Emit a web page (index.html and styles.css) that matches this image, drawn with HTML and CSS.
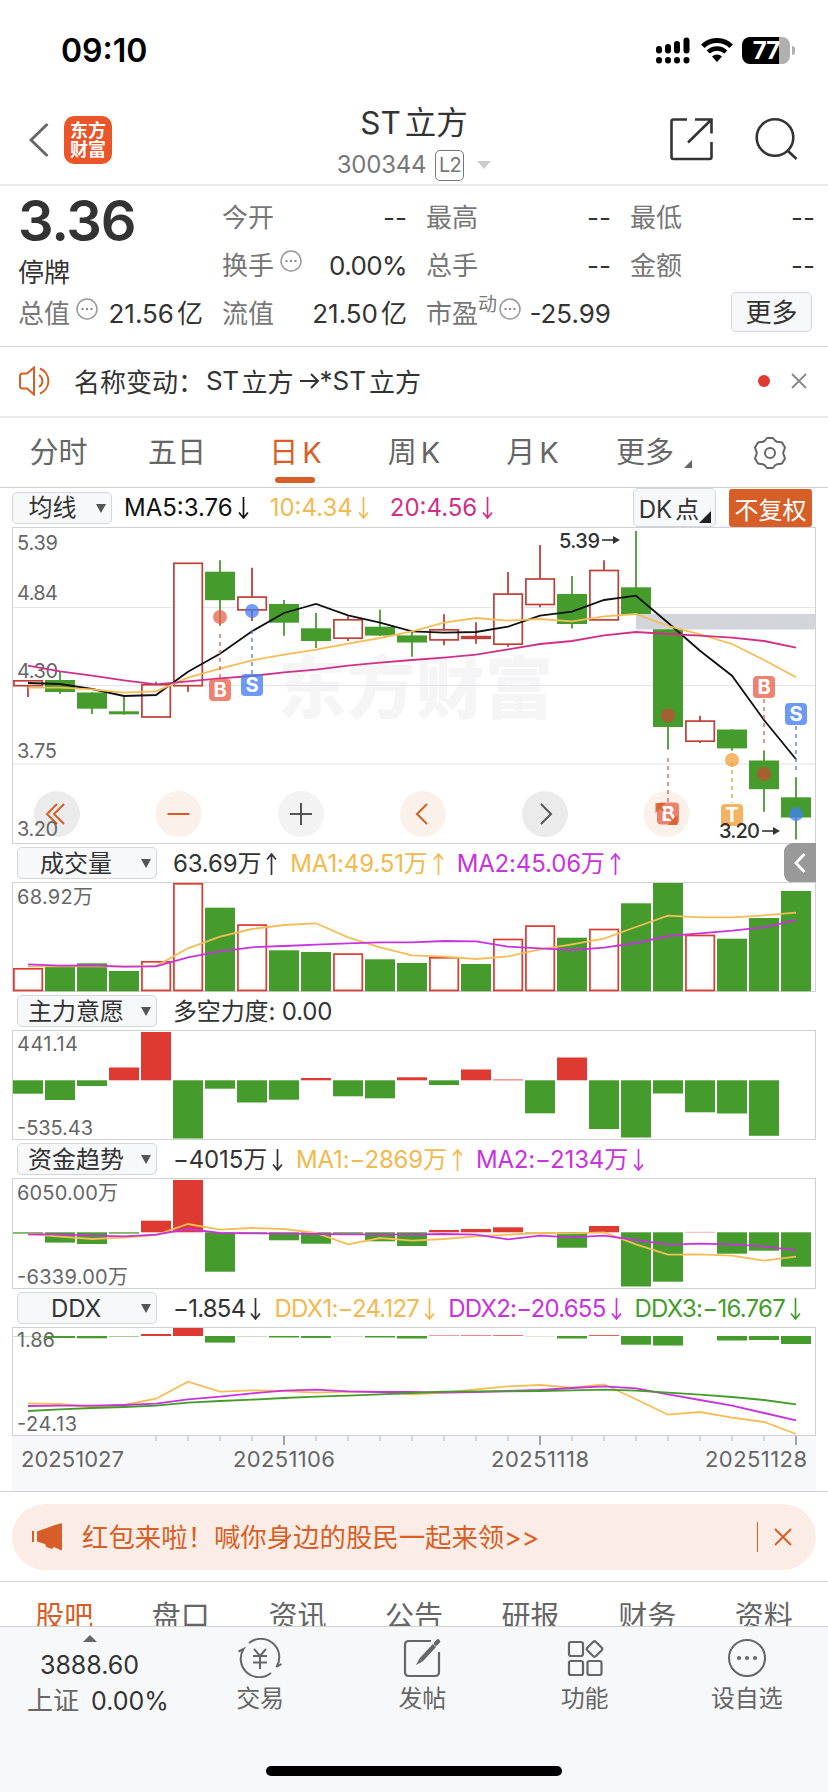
FILE: index.html
```html
<!DOCTYPE html>
<html lang="zh-CN">

<head>
    <meta charset="UTF-8">
    <meta name="viewport" content="width=device-width, initial-scale=1.0">
    <title>ST立方 300344</title>
    <link rel="stylesheet" href="styles.css">
</head>

<body>
    <!-- shared icons -->
    <svg class="defs" width="0" height="0">
        <symbol id="down" viewBox="0 0 11 22">
            <path d="M5.5 0V21M1 15.5L5.5 21L10 15.5" fill="none" stroke="currentColor" stroke-width="1.7" />
        </symbol>
        <symbol id="up" viewBox="0 0 11 22">
            <path d="M5.5 22V1M1 6.5L5.5 1L10 6.5" fill="none" stroke="currentColor" stroke-width="1.7" />
        </symbol>
        <symbol id="tip" viewBox="0 0 22 22">
            <circle cx="11" cy="11" r="10" fill="none" stroke="#999" stroke-width="1.5" />
            <path d="M5.5 11h2M10 11h2M14.5 11h2" stroke="#888" stroke-width="2" />
        </symbol>
    </svg>

    <div class="status-bar">
        <span class="time">09:10</span>
        <div class="status-icons">
            <svg width="34" height="27" viewBox="0 0 34 27">
                <g stroke="#000" stroke-width="6" stroke-linecap="round">
                    <path d="M3 12V13.5M12 10V13.5M21 7V13.5M30.500 3.500V13.500" />
                    <path d="M3 23V23.500M12 23V23.500M21 23V23.500M30.500 23V23.500" />
                </g>
            </svg>
            <svg class="wifi" width="32" height="24" viewBox="0 0 32 24">
                <path d="M1.800 8.200A20.500 20.500 0 0 1 30.200 8.200" fill="none" stroke="#000" stroke-width="5" />
                <path d="M7.200 14A12.600 12.600 0 0 1 24.800 14" fill="none" stroke="#000" stroke-width="4.500" />
                <path d="M16 24L11 18.500A7.500 7.500 0 0 1 21 18.500Z" />
            </svg>
            <div class="battery"><span>77</span></div>
            <i class="battery-cap"></i>
        </div>
    </div>

    <header class="header">
        <div class="header-left">
            <svg width="20" height="34" viewBox="0 0 20 34">
                <path d="M18.500 1L2 17L18.500 33" fill="none" stroke="#666" stroke-width="2.800" />
            </svg>
            <div class="logo"><span>东方</span><span>财富</span></div>
        </div>
        <div class="header-title">
            <h1>ST<span>立方</span></h1>
            <p><span class="code">300344</span><b>L2</b><i></i></p>
        </div>
        <div class="header-right">
            <svg width="44" height="44" viewBox="0 0 44 44">
                <g fill="none" stroke="#333" stroke-width="2.600">
                    <path d="M18 2.500H4.500Q2.500 2.500 2.500 4.500V40Q2.500 42 4.500 42H40.500Q42.500 42 42.500 40V25" />
                    <path d="M26 2.500H42.500V16.500M42 3L19 25.500" />
                </g>
            </svg>
            <svg width="44" height="44" viewBox="0 0 44 44">
                <circle cx="20" cy="20.500" r="18.300" fill="none" stroke="#333" stroke-width="2.600" />
                <path d="M32.500 33.500L41.500 42" stroke="#333" stroke-width="2.600" />
            </svg>
        </div>
    </header>

    <section class="quote">
        <div class="price">
            <strong>3.36</strong>
            <span>停牌</span>
        </div>
        <div class="cell"><label>今开</label><span>--</span></div>
        <div class="cell"><label>最高</label><span>--</span></div>
        <div class="cell"><label>最低</label><span>--</span></div>
        <div class="cell"><label>换手<svg class="tip"><use href="#tip" /></svg></label><span class="rate">0.00%</span></div>
        <div class="cell"><label>总手</label><span>--</span></div>
        <div class="cell"><label>金额</label><span>--</span></div>
        <div class="cell"><label>总值<svg class="tip"><use href="#tip" /></svg></label><span>21.56<em>亿</em></span></div>
        <div class="cell"><label>流值</label><span>21.50<em>亿</em></span></div>
        <div class="cell"><label>市盈<sup>动</sup><svg class="tip tight"><use href="#tip" /></svg></label><span>-25.99</span></div>
        <div class="cell"><button class="more-btn">更多</button></div>
    </section>

    <section class="notice">
        <svg width="34" height="30" viewBox="0 0 34 30">
            <g fill="none" stroke="#d75f27" stroke-width="2">
                <path d="M15 1.500V28.500L8 22.500H3.500Q1 22.500 1 20V10Q1 7.500 3.500 7.500H8Z" />
                <path d="M20 9A7 7 0 0 1 20 21M21 2.500A13.500 13.500 0 0 1 21 27.500" />
            </g>
        </svg>
        <p>名称变动：<span>ST</span><em>立方</em><svg class="to" width="20" height="20" viewBox="0 0 20 20"><path d="M0 10H18M11 3L18 10L11 17" fill="none" stroke="#333" stroke-width="2" /></svg>*ST<em>立方</em></p>
        <i class="dot"></i>
        <svg width="16" height="16" viewBox="0 0 16 16">
            <path d="M1 1L15 15M15 1L1 15" stroke="#888" stroke-width="1.800" />
        </svg>
    </section>

    <nav class="periods">
        <a>分时</a>
        <a>五日</a>
        <a class="active">日<span>K</span></a>
        <a>周<span>K</span></a>
        <a>月<span>K</span></a>
        <a class="has-more">更多</a>
        <a class="gear">
            <svg width="34" height="34" viewBox="-17 -17 34 34">
                <g fill="none" stroke="#666" stroke-width="2">
                    <path d="M-5-12.500L-3-15H3L5-12.500Q7-10.500 9.500-11L12-10.500L15-5.500L14-2.500Q12.500 0 14 2.500L15 5.500L12 10.500L9.500 11Q7 10.500 5 12.500L3 15H-3L-5 12.500Q-7 10.500-9.500 11L-12 10.500L-15 5.500L-14 2.500Q-12.500 0-14-2.500L-15-5.500L-12-10.500L-9.500-11Q-7-10.500-5-12.500Z" stroke-linejoin="round" />
                    <circle r="5" />
                </g>
            </svg>
        </a>
    </nav>

    <div class="legend main-legend">
        <button class="pick small">均线</button>
        <span class="black">MA5:3.76<svg><use href="#down" /></svg></span>
        <span class="yellow">10:4.34<svg><use href="#down" /></svg></span>
        <span class="pink">20:4.56<svg><use href="#down" /></svg></span>
        <button class="dk">DK<em>点</em></button>
        <button class="fq">不复权</button>
    </div>
    <svg class="chart" id="kline" width="804" height="317" viewBox="12 527 804 317"></svg>

    <div class="legend">
        <button class="pick">成交量</button>
        <span class="dark">63.69万<svg><use href="#up" /></svg></span>
        <span class="yellow">MA1:49.51万<svg><use href="#up" /></svg></span>
        <span class="purple">MA2:45.06万<svg><use href="#up" /></svg></span>
        <div class="side-tab">
            <svg width="12" height="20" viewBox="0 0 12 20">
                <path d="M10.500 1L2 10L10.500 19" fill="none" stroke="#fff" stroke-width="2.800" />
            </svg>
        </div>
    </div>
    <svg class="chart" id="volume" width="804" height="110" viewBox="12 882 804 110"></svg>

    <div class="legend">
        <button class="pick">主力意愿</button>
        <span class="dark">多空力度: 0.00</span>
    </div>
    <svg class="chart" id="will" width="804" height="110" viewBox="12 1030 804 110"></svg>

    <div class="legend">
        <button class="pick">资金趋势</button>
        <span class="dark">−4015万<svg><use href="#down" /></svg></span>
        <span class="yellow">MA1:−2869万<svg><use href="#up" /></svg></span>
        <span class="purple">MA2:−2134万<svg><use href="#down" /></svg></span>
    </div>
    <svg class="chart" id="fund" width="804" height="111" viewBox="12 1178 804 111"></svg>

    <div class="legend ddx-legend">
        <button class="pick">DDX</button>
        <span class="dark">−1.854<svg><use href="#down" /></svg></span>
        <span class="yellow">DDX1:−24.127<svg><use href="#down" /></svg></span>
        <span class="purple">DDX2:−20.655<svg><use href="#down" /></svg></span>
        <span class="green">DDX3:−16.767<svg><use href="#down" /></svg></span>
    </div>
    <svg class="chart" id="ddx" width="804" height="109" viewBox="12 1327 804 109"></svg>
    <svg class="chart axis" id="axis" width="804" height="55" viewBox="12 1436 804 55"></svg>

    <section class="banner-wrap">
        <div class="banner">
            <svg width="31" height="28" viewBox="0 0 31 28">
                <path d="M1 8V19" stroke="#d75f27" stroke-width="2" />
                <path d="M5 8.500L23 2L28 0.500H30V27H28.500L24 25L22 24L20 26L14.500 24L13 21L5 18.500Z" fill="#d75f27" />
            </svg>
            <p>红包来啦！喊你身边的股民一起来领&gt;&gt;</p>
            <i></i>
            <svg width="18" height="18" viewBox="0 0 18 18">
                <path d="M1 1L17 17M17 1L1 17" stroke="#d75f27" stroke-width="2" />
            </svg>
        </div>
    </section>

    <nav class="sections">
        <a class="active">股吧</a>
        <a>盘口</a>
        <a>资讯</a>
        <a>公告</a>
        <a>研报</a>
        <a>财务</a>
        <a>资料</a>
    </nav>

    <footer class="bottom">
        <div class="toolbar">
            <div class="index">
                <i></i>
                <span>3888.60</span>
                <span class="change"><label>上证</label>0.00%</span>
            </div>
            <a>
                <svg width="44" height="40" viewBox="-22 -20 44 40">
                    <g fill="none" stroke="#666" stroke-width="2">
                        <path d="M-11-15A18.500 18.500 0 0 1 16.500 9L21.500 6" />
                        <path d="M11 15A18.500 18.500 0 0 1-16.500-9L-21.500-6.500" />
                        <path d="M-6-9L0-2L6-9M0-2V11M-7-2H7M-7 4.500H7" />
                    </g>
                </svg>
                <span>交易</span>
            </a>
            <a>
                <svg width="44" height="40" viewBox="-22 -20 44 40">
                    <g fill="none" stroke="#666" stroke-width="2.200">
                        <path d="M9-17H-13Q-17-17-17-13V14Q-17 18-13 18H13Q17 18 17 14V-6" />
                        <path d="M12.500-12.500L-1 2" stroke-width="4.500" />
                        <path d="M-2.500 0.500L0.500 3.500L-6 7Z" fill="#666" stroke="none" />
                        <path d="M14-14.500L16-16.500" stroke-width="4.500" stroke-linecap="round" />
                    </g>
                </svg>
                <span>发帖</span>
            </a>
            <a>
                <svg width="44" height="40" viewBox="-22 -20 44 40">
                    <g fill="none" stroke="#666" stroke-width="2.200">
                        <rect x="-16" y="-16" width="14" height="14" rx="2" />
                        <rect x="-16" y="3" width="14" height="14" rx="2" />
                        <rect x="2.500" y="3" width="14" height="14" rx="2" />
                        <rect x="3.500" y="-15" width="12" height="12" rx="2" transform="rotate(45 9.500 -9)" />
                    </g>
                </svg>
                <span>功能</span>
            </a>
            <a>
                <svg width="44" height="40" viewBox="-22 -20 44 40">
                    <circle r="18" fill="none" stroke="#666" stroke-width="2" />
                    <g fill="#666">
                        <circle cx="-8" r="2" />
                        <circle r="2" />
                        <circle cx="8" r="2" />
                    </g>
                </svg>
                <span>设自选</span>
            </a>
        </div>
        <div class="home-bar"></div>
    </footer>

    <script src="script.js"></script>
</body>

</html>
```
FILE: styles.css
```css
* {
    box-sizing: border-box;
}

body {
    margin: 0;
    width: 828px;
    height: 1792px;
    overflow: hidden;
    background: #fff;
    color: #333;
    font-family: Inter, "Noto Sans CJK SC", sans-serif;
    font-size: 26px;
}

h1, p {
    margin: 0;
    font-weight: 400;
}

em, i, b {
    font-style: normal;
    font-weight: 400;
}

button {
    font-family: inherit;
    padding: 0;
    border: 1px solid #d5d6da;
    border-radius: 5px;
    background: #f7f8fa;
    color: #333;
}

svg {
    flex: none;
    display: block;
}

.defs {
    position: absolute;
}

/* status bar */
.status-bar {
    display: flex;
    justify-content: space-between;
    align-items: center;
    height: 100px;
    padding: 0 33px 0 61px;
}

.time {
    color: #000;
    font-size: 32px;
    font-weight: 600;
}

.status-icons {
    display: flex;
    align-items: center;
}

.wifi {
    margin: 0 9px 0 11px;
}

.battery {
    width: 48px;
    height: 27px;
    border-radius: 8px;
    background: linear-gradient(to right, #000 37px, #b0b0b0 37px);
    color: #fff;
    font-size: 24px;
    font-weight: 700;
    line-height: 27px;
    text-align: center;
    letter-spacing: -1px;
}

.battery-cap {
    width: 3px;
    height: 9px;
    margin-left: 2px;
    border-radius: 0 3px 3px 0;
    background: #b0b0b0;
}

/* header */
.header {
    display: grid;
    grid-template-columns: 1fr auto 1fr;
    height: 86px;
    border-bottom: 2px solid #ebebeb;
}

.header-left {
    display: flex;
    align-items: center;
    gap: 15px;
    padding: 0 0 4px 29px;
}

.logo {
    display: flex;
    flex-direction: column;
    justify-content: center;
    align-items: center;
    width: 48px;
    height: 48px;
    border-radius: 10px;
    background: #ea5529;
    color: #fff;
    font-size: 18px;
    font-weight: 700;
    line-height: 19px;
}

.header-title {
    text-align: center;
}

.header-title h1 {
    margin-top: 4px;
    font-size: 31.500px;
    line-height: 38px;
}

.header-title h1 span {
    margin-left: 4px;
}

.header-title p {
    display: flex;
    align-items: center;
    margin-top: 7px;
    color: #777;
    font-size: 24px;
    line-height: 32px;
    letter-spacing: -0.200px;
}

.header-title b {
    width: 29px;
    height: 31px;
    margin-left: 9px;
    border: 1.5px solid #777;
    border-radius: 5px;
    font-size: 20px;
    line-height: 28px;
    letter-spacing: -1px;
}

.header-title i {
    margin-left: 13px;
    border: 7px solid transparent;
    border-top: 8px solid #ccc;
    border-bottom: 0;
}

.header-right {
    display: flex;
    justify-content: flex-end;
    gap: 42px;
    padding: 17px 29px 0 0;
}

/* quote */
.quote {
    display: grid;
    grid-template-columns: repeat(4, 184px);
    grid-template-rows: repeat(3, 48px);
    column-gap: 20px;
    height: 161px;
    padding: 8px 13px 0 19px;
    border-bottom: 1px solid #d0d0d0;
}

.price {
    grid-row: span 2;
    display: flex;
    flex-direction: column;
}

.price strong {
    margin-left: -1px;
    font-size: 56px;
    font-weight: 600;
    line-height: 54px;
    letter-spacing: -1.300px;
}

.price span {
    margin: 7px 0 0 -1px;
    line-height: 36px;
}

.cell {
    display: flex;
    justify-content: space-between;
    align-items: center;
    line-height: 36px;
    white-space: nowrap;
}

.cell label {
    display: flex;
    align-items: center;
    margin-left: -1px;
    color: #777;
}

.cell em {
    margin-left: 3px;
}

.cell sup {
    align-self: flex-start;
    margin-top: -8px;
    font-size: 19px;
    line-height: 34px;
}

.rate {
    letter-spacing: -0.600px;
}

.tip {
    width: 22px;
    height: 22px;
    margin: -10px 0 0 6px;
}

.tip.tight {
    margin-left: 2px;
}

.more-btn {
    width: 81px;
    height: 40px;
    margin: -5px 3px 0 auto;
    padding-top: 2px;
    font-size: 26px;
    line-height: 34px;
}

/* notice */
.notice {
    display: flex;
    align-items: center;
    height: 71px;
    padding: 0 21px 2px 19px;
    border-bottom: 2px solid #ebebeb;
}

.notice p {
    display: flex;
    align-items: center;
    margin: 0 auto 0 21px;
}

.notice p span {
    margin-left: 2px;
    letter-spacing: -0.500px;
}

.notice em {
    margin-left: 3px;
}

.to {
    margin: 0 0 0 6px;
}

.dot {
    width: 12px;
    height: 12px;
    margin-right: 21px;
    border-radius: 50%;
    background: #de3a32;
}

/* period tabs */
.periods {
    display: grid;
    grid-template-columns: repeat(7, 118.500px);
    justify-content: center;
    height: 70px;
    border-bottom: 1px solid #d0d0d0;
    color: #666;
    font-size: 29px;
    line-height: 70px;
    text-align: center;
}

.periods a {
    position: relative;
}

.periods span {
    margin-left: 4px;
}

.periods .active {
    color: #d75f27;
}

.periods .active::after {
    content: "";
    position: absolute;
    left: 39px;
    bottom: 5px;
    width: 40px;
    height: 6px;
    border-radius: 3px;
    background: #d75f27;
}

.periods .has-more {
    padding-right: 12px;
}

.has-more::after {
    content: "";
    position: absolute;
    right: 18px;
    bottom: 20px;
    border: 4px solid #666;
    border-top-color: transparent;
    border-left-color: transparent;
}

.gear {
    display: flex;
    justify-content: center;
    align-items: center;
}

/* legends above every chart */
.legend {
    display: flex;
    align-items: center;
    height: 38px;
    padding-left: 17px;
    font-size: 24px;
    letter-spacing: -0.150px;
    white-space: nowrap;
}

.legend > span {
    display: flex;
    align-items: center;
    margin-left: 13px;
    padding-top: 2px;
    line-height: 34px;
}

.legend > span svg {
    width: 11px;
    height: 22px;
    margin-left: 5px;
}

.main-legend {
    height: 39px;
    padding-left: 12px;
    letter-spacing: 0;
}

.main-legend > span {
    margin: 0 7px 0 14px;
    padding-top: 0;
}

.ddx-legend {
    letter-spacing: -0.750px;
}

.pick {
    display: flex;
    flex: none;
    justify-content: center;
    align-items: center;
    position: relative;
    width: 140px;
    height: 32px;
    padding: 2px 22px 0 0;
    font-size: 24px;
    line-height: 28px;
}

.pick.small {
    width: 100px;
    padding: 0 19px 0 0;
}

.pick::after {
    content: "";
    position: absolute;
    right: 5px;
    top: 11px;
    border: 5px solid transparent;
    border-top: 9px solid #555;
    border-bottom: 0;
}

.legend > .pick + span {
    margin-left: 16px;
}

.legend > .small + span {
    margin-left: 12px;
}

.black { color: #111; }
.dark { color: #333; }
.yellow { color: #f2b94f; }
.pink { color: #cf2f86; }
.purple { color: #c734dc; }
.green { color: #459c2c; }

.dk {
    position: relative;
    width: 83px;
    height: 39px;
    margin-left: auto;
    padding-right: 11px;
    font-size: 24px;
}

.dk em {
    margin-left: 3px;
}

.dk::after {
    content: "";
    position: absolute;
    right: 4px;
    bottom: 3px;
    border: 6px solid #222;
    border-top-color: transparent;
    border-left-color: transparent;
}

.fq {
    width: 83px;
    height: 38px;
    margin: 1px 16px 0 13px;
    border: 0;
    border-radius: 3px;
    background: #d75f27;
    color: #fff;
    font-size: 24px;
}

.side-tab {
    display: flex;
    justify-content: center;
    align-items: center;
    width: 32px;
    height: 40px;
    margin: 0 12px 0 auto;
    border-radius: 9px 0 0 9px;
    background: #999;
}

/* charts */
.chart {
    margin-left: 12px;
}

.chart text {
    fill: #666;
    font-size: 20px;
}

.chart .mark {
    fill: #333;
    font-weight: 500;
}

.chart .badge {
    fill: #fff;
    font-size: 20px;
    font-weight: 700;
    text-anchor: middle;
}

.chart .watermark {
    fill: #f5f5f5;
    font-size: 68px;
    font-weight: 900;
}

.axis {
    background: #f7f8fa;
}

.chart.axis text {
    font-size: 22px;
}

/* banner */
.banner-wrap {
    height: 91px;
    padding: 12px 12px 0;
    border-top: 1px solid #d0d0d0;
    border-bottom: 1px solid #d0d0d0;
}

.banner {
    display: flex;
    align-items: center;
    height: 66px;
    padding: 0 24px 0 20px;
    border-radius: 33px;
    background: #fbede6;
    color: #d75f27;
    font-size: 26.400px;
}

.banner p {
    margin: 0 auto 0 19px;
    padding-bottom: 4px;
}

.banner i {
    width: 1.500px;
    height: 30px;
    margin-right: 16px;
    background: #d75f27;
}

/* section tabs, cut off by the bottom bar */
.sections {
    display: grid;
    grid-template-columns: repeat(7, 116.600px);
    justify-content: center;
    height: 44px;
    overflow: hidden;
    color: #666;
    font-size: 29px;
    line-height: 70px;
    text-align: center;
}

.sections .active {
    color: #d75f27;
}

/* bottom bar */
.bottom {
    height: 166px;
    border-top: 1px solid #d0d0d0;
    background: #f7f8fa;
}

.toolbar {
    display: grid;
    grid-template-columns: 179px repeat(4, 162.250px);
    height: 139px;
}

.toolbar a {
    display: flex;
    flex-direction: column;
    align-items: center;
    padding-top: 11px;
    color: #666;
    font-size: 24px;
}

.toolbar a span {
    margin-top: 4px;
    line-height: 34px;
}

.index {
    display: flex;
    flex-direction: column;
    align-items: center;
    font-size: 25px;
    line-height: 35px;
}

.index i {
    margin: 8px 0 6px;
    border: 7px solid transparent;
    border-bottom: 7px solid #666;
    border-top: 0;
}

.index label {
    margin-right: 12px;
    color: #666;
    font-size: 26px;
}

.index .change {
    padding-left: 17px;
}

.home-bar {
    width: 296px;
    height: 10px;
    margin: 0 auto;
    border-radius: 5px;
    background: #000;
}
```
FILE: script.js
```js
const RED = '#de3a32';
const DARK_RED = '#bf3f38';
const GREEN = '#459c2c';
const YELLOW = '#f5bd55';
const PURPLE = '#c734dc';
const PINK = '#d0308a';

// 25 trading days, 32px each
const cx = i => 28 + i * 32;

const rect = (x, y, w, h, attrs) => `<rect x="${x}" y="${y}" width="${w}" height="${h}" ${attrs}/>`;
const line = (x1, y1, x2, y2, color, w = 1, extra = '') =>
    `<line x1="${x1}" y1="${y1}" x2="${x2}" y2="${y2}" stroke="${color}" stroke-width="${w}" ${extra}/>`;
const text = (x, y, str, len, cls = '') =>
    `<text x="${x}" y="${y}" ${len ? `textLength="${len}"` : ''} class="${cls}">${str}</text>`;
const curve = (ys, color, w = 1.8) =>
    `<polyline fill="none" stroke="${color}" stroke-width="${w}" points="${ys.map((y, i) => cx(i) + ',' + y).join(' ')}"/>`;
const frame = (y, h) => rect(12.5, y + 0.5, 803, h - 1, 'fill="none" stroke="#d0d1d5"');

function draw(id, parts) {
    document.getElementById(id).innerHTML = parts.join('');
}

function body(i, top, bottom, up, color) {
    if (up && bottom - top > 4) {
        return rect(cx(i) - 14.1, top + 0.8, 28.4, bottom - top - 1.6, `fill="#fff" stroke="${color}" stroke-width="1.7"`);
    }
    return rect(cx(i) - 15, top, 30, bottom - top, `fill="${up ? color : GREEN}"`);
}

// candles: [up, body top, body bottom, wick top, wick bottom]
const candles = [
    [1, 680, 686.5, 680, 697], [0, 680, 692, 671, 694], [0, 692.5, 708.7, 692, 714], [0, 711.3, 714.3, 696, 714.5],
    [1, 684, 717.8, 681.7, 717], [1, 562.5, 686.5, 563, 691.7], [0, 571.7, 600.2, 560.3, 625.7], [1, 596.3, 610.7, 567.7, 621],
    [0, 604, 622.7, 600, 635.7], [0, 628.3, 641, 613, 648], [1, 619, 639, 616.3, 641], [0, 626.7, 635.6, 609.7, 636],
    [0, 635.4, 642.5, 631.7, 656.7], [1, 629, 640.7, 614.3, 645.3], [1, 635.8, 639.2, 622.3, 643.8], [1, 593.3, 645, 572, 646.7],
    [1, 578.2, 605.3, 545, 607.2], [0, 594, 624, 576, 628.5], [1, 569.7, 620.7, 560.3, 620], [0, 587.3, 614, 531, 614],
    [0, 629.3, 727, 629.3, 749.5], [1, 720.3, 742, 715.7, 743], [0, 729.5, 748.4, 729.5, 750.7], [0, 760.5, 789.2, 750.5, 811.7],
    [0, 797.3, 817.5, 777.3, 839.5]
];
const ma5 = [683, 684, 689, 696, 695, 671.7, 653.7, 631.3, 613, 604, 615.3, 622.7, 631.3, 632.7, 632, 626.7, 615.7, 611.7, 600, 595.7, 622.7, 650.7, 675.7, 720, 759.3];
const ma10 = [687.7, 687.7, 689.3, 692.7, 691.3, 677.7, 668.7, 660.3, 654.7, 649.7, 643.7, 638, 631.3, 622.7, 618, 620.7, 619, 621.3, 616.3, 614, 626, 634.3, 644, 660, 677.3];
const ma20 = [665.7, 671.3, 675.7, 680.3, 684.3, 681.3, 678.3, 676, 672.3, 669.7, 665.7, 662.7, 660, 657.7, 654.7, 649.3, 644, 641, 635.3, 632, 634, 635.7, 637.7, 641, 647.7];

// trade marks: [day, letter, dot y, badge y, dash from, dash to, color, dot color]
const marks = [
    [6, 'B', 617, 690, 634, 678, '#e9604c', '#e9604c'], [7, 'S', 611, 685, 630, 674, '#427ff5', '#427ff5'],
    [20, 'B', 715.5, 813.5, 758, 802, '#e9604c', '#c54c30'], [22, 'T', 760, 815, 762, 803, '#f09d35', '#f09d35'],
    [23, 'B', 774, 687, 699, 746, '#e9604c', '#c54c30'], [24, 'S', 814, 714, 726, 770, '#427ff5', '#427ff5']
];
function mark([i, letter, dotY, badgeY, from, to, color, dotColor]) {
    const x = cx(i);
    return line(x, from, x, to, color, 1.7, 'stroke-dasharray="4 4" opacity="0.8"') +
        `<circle cx="${x}" cy="${dotY}" r="7" fill="${dotColor}" opacity="0.75"/>` +
        rect(x - 11, badgeY - 11, 22, 22, `rx="4" fill="${color}" opacity="0.78"`) +
        text(x, badgeY + 7.3, letter, 0, 'badge');
}

// round buttons over the chart
function roundBtn(x, fill, icon) {
    return `<g transform="translate(${x} 814)"><circle r="23" fill="${fill}"/>${icon}</g>`;
}
const stroke = (d, color) => `<path d="${d}" fill="none" stroke="${color}" stroke-width="2"/>`;
const arrow = (x, y) => line(x, y, x + 13, y, '#333', 1.6) + `<path d="M${x + 11} ${y - 4}L${x + 18} ${y}L${x + 11} ${y + 4}Z" fill="#333"/>`;

draw('kline', [
    text(278, 713, '东方财富', 275, 'watermark'),
    line(12, 607.5, 815, 607.5, '#e4e5ea'), line(12, 685.5, 815, 685.5, '#e4e5ea'), line(12, 764, 815, 764, '#eff0f6', 2),
    frame(527, 317),
    roundBtn(57, '#ebebeb', stroke('M0-10L-10 0L0 10M7-10L-3 0L7 10', '#d75f27')),
    roundBtn(178.5, '#fbf1eb', stroke('M-11 0H11', '#d75f27')),
    roundBtn(301, '#f3f3f3', stroke('M-11 0H11M0-11V11', '#555')),
    roundBtn(423, '#fbf1eb', stroke('M4-10L-6 0L4 10', '#d75f27')),
    roundBtn(545, '#ebebeb', stroke('M-4-10L6 0L-4 10', '#555')),
    roundBtn(666.5, '#fbf1eb', ''),
    rect(636, 614, 179.5, 15.5, 'fill="#d4d5da"'),
    ...candles.map(([up, t, b, wt, wb], i) =>
        line(cx(i), wt, cx(i), wb, up ? DARK_RED : GREEN, 1.8) + body(i, t, b, up, DARK_RED)),
    text(17, 550, '5.39', 41), text(17, 599.5, '4.84', 41), text(17, 678, '4.30', 41),
    text(17, 757.5, '3.75', 40), text(17, 836, '3.20', 41),
    curve(ma5, '#111'), curve(ma10, YELLOW), curve(ma20, PINK),
    ...marks.map(mark),
    // fullscreen corners
    '<g transform="translate(666.500 814)" opacity="0.85"><path d="M-11-11H-1L-11-1ZM11 11H1L11 1Z" fill="#d75f27"/>' +
    stroke('M-8-8L-3-3M3 3L8 8', '#d75f27') + '</g>',
    text(559, 548, '5.39', 41, 'mark'), arrow(602, 540),
    text(719, 838, '3.20', 41, 'mark'), arrow(762, 831)
]);

// volume: top of every bar
const volTop = [968, 967, 963.3, 971, 961, 883, 907.7, 924.3, 950.3, 952, 953.3, 959.3, 963, 957, 964, 938.7, 925.3, 937.7, 928.7, 903.3, 883, 934.7, 938.7, 918, 891];
const volUp = [1, 0, 0, 0, 1, 1, 0, 1, 0, 0, 1, 0, 0, 1, 0, 1, 1, 0, 1, 0, 0, 1, 0, 0, 0];
draw('volume', [
    frame(882, 110),
    ...volTop.map((y, i) => body(i, y, 991.2, volUp[i], RED)),
    curve([966.3, 966.3, 966.3, 966.7, 966, 948.3, 936.7, 929, 925, 923.3, 937.3, 947.3, 955.3, 956.7, 959, 956.3, 949.3, 944.3, 938.7, 927, 915.7, 917.3, 917.3, 915.3, 912.7], YELLOW),
    curve([964.3, 965.7, 965.3, 966.7, 966.3, 957.3, 951.3, 947.3, 946, 944.7, 943.3, 942.3, 942.3, 941, 941.3, 946.7, 948.3, 950, 947.7, 943, 936, 933.3, 930.7, 927.3, 920], PURPLE),
    text(17, 904, '68.92万', 76)
]);

// bars growing from a zero line, null = nothing that day
function bars(zero, ends) {
    return ends.map((y, i) => {
        if (y === null) return '';
        const h = Math.abs(y - zero);
        return rect(cx(i) - 15, Math.min(y, zero), 30, h, `fill="${y < zero ? RED : GREEN}"`);
    }).join('');
}

draw('will', [
    frame(1030, 110),
    bars(1080.3, [1093.7, 1100, 1086, 1067.5, 1032, 1138.5, 1088.7, 1102.5, 1099.7, 1078, 1096.3, 1098.3, 1077.3, 1085, 1069.5, 1079.5, 1113.3, 1057.5, 1129, 1137.5, 1093.5, 1112.3, 1113.5, 1135.8, null]),
    text(17, 1051, '441.14', 61), text(17, 1135, '-535.43', 76)
]);

draw('fund', [
    frame(1178, 111),
    bars(1232.3, [1233.6, 1242.6, 1244, 1233.6, 1220.7, 1180, 1271.7, 1233, 1240.3, 1243.7, 1233.7, 1241.3, 1246, 1230, 1229, 1227.3, 1232.8, 1247.7, 1226, 1286.5, 1281.7, 1231.9, 1253.7, 1250.7, 1266.7]),
    curve([1234, 1236.7, 1239, 1237.7, 1235, 1224, 1229.7, 1228, 1229, 1233, 1244.3, 1238, 1240.7, 1239, 1236.3, 1234.7, 1233, 1233.3, 1232.3, 1244.3, 1254.7, 1254.3, 1255.7, 1260.7, 1256.7], YELLOW),
    curve([1234.3, 1234.3, 1235.7, 1236.3, 1234.7, 1229, 1233, 1233.3, 1233.7, 1234, 1234.3, 1234.3, 1234.3, 1234, 1234.7, 1239.3, 1235.7, 1237.3, 1235.7, 1240, 1244.7, 1243.7, 1244.3, 1246.3, 1250.3], PURPLE),
    text(17, 1199.5, '6050.00万', 101), text(17, 1283.5, '-6339.00万', 111)
]);

draw('ddx', [
    frame(1327, 109),
    bars(1336, [1336.3, 1338, 1338.3, 1336.5, 1334, 1328, 1342.6, 1336.3, 1337.5, 1337.9, 1336.3, 1337.5, 1338.5, 1335.5, 1335.4, 1335.3, 1336.2, 1338.5, 1335.2, 1344.7, 1345.5, null, 1340.5, 1340, 1344]),
    curve([1403.3, 1404, 1407, 1405, 1398.7, 1381.7, 1391.7, 1390.3, 1391, 1392.7, 1391.7, 1392, 1394.3, 1392.7, 1389.3, 1386.3, 1385, 1387.7, 1384.3, 1399.3, 1414.7, 1412, 1417.7, 1422, 1434], YELLOW),
    curve([1406, 1405.7, 1405.7, 1405, 1403.7, 1399.3, 1396.7, 1393.3, 1390.7, 1389.7, 1391.3, 1392, 1392, 1392.7, 1392, 1391, 1390, 1388, 1386.3, 1388.3, 1394.3, 1400, 1405.7, 1413, 1420.3], PURPLE),
    curve([1411, 1409.3, 1408, 1407, 1405.7, 1402.7, 1401, 1399.7, 1398, 1396.7, 1395.7, 1394.3, 1393, 1391.7, 1391.3, 1391.3, 1391, 1390.3, 1389.7, 1390.7, 1392.7, 1394.7, 1397, 1400, 1404.3], GREEN),
    text(17, 1347, '1.86', 38), text(17, 1431, '-24.13', 60)
]);

const ticks = [];
for (let i = 4; i < 25; i++) {
    const long = i === 8 || i === 16 || i === 24;
    ticks.push(line(cx(i), 1436, cx(i), long ? 1445 : 1441, long ? '#888' : '#ccc', 1.5));
}
draw('axis', [
    ...ticks,
    text(21, 1466.7, '20251027', 103), text(233, 1466.7, '20251106', 102),
    text(491, 1466.7, '20251118', 98), text(705, 1466.7, '20251128', 102)
]);
```
